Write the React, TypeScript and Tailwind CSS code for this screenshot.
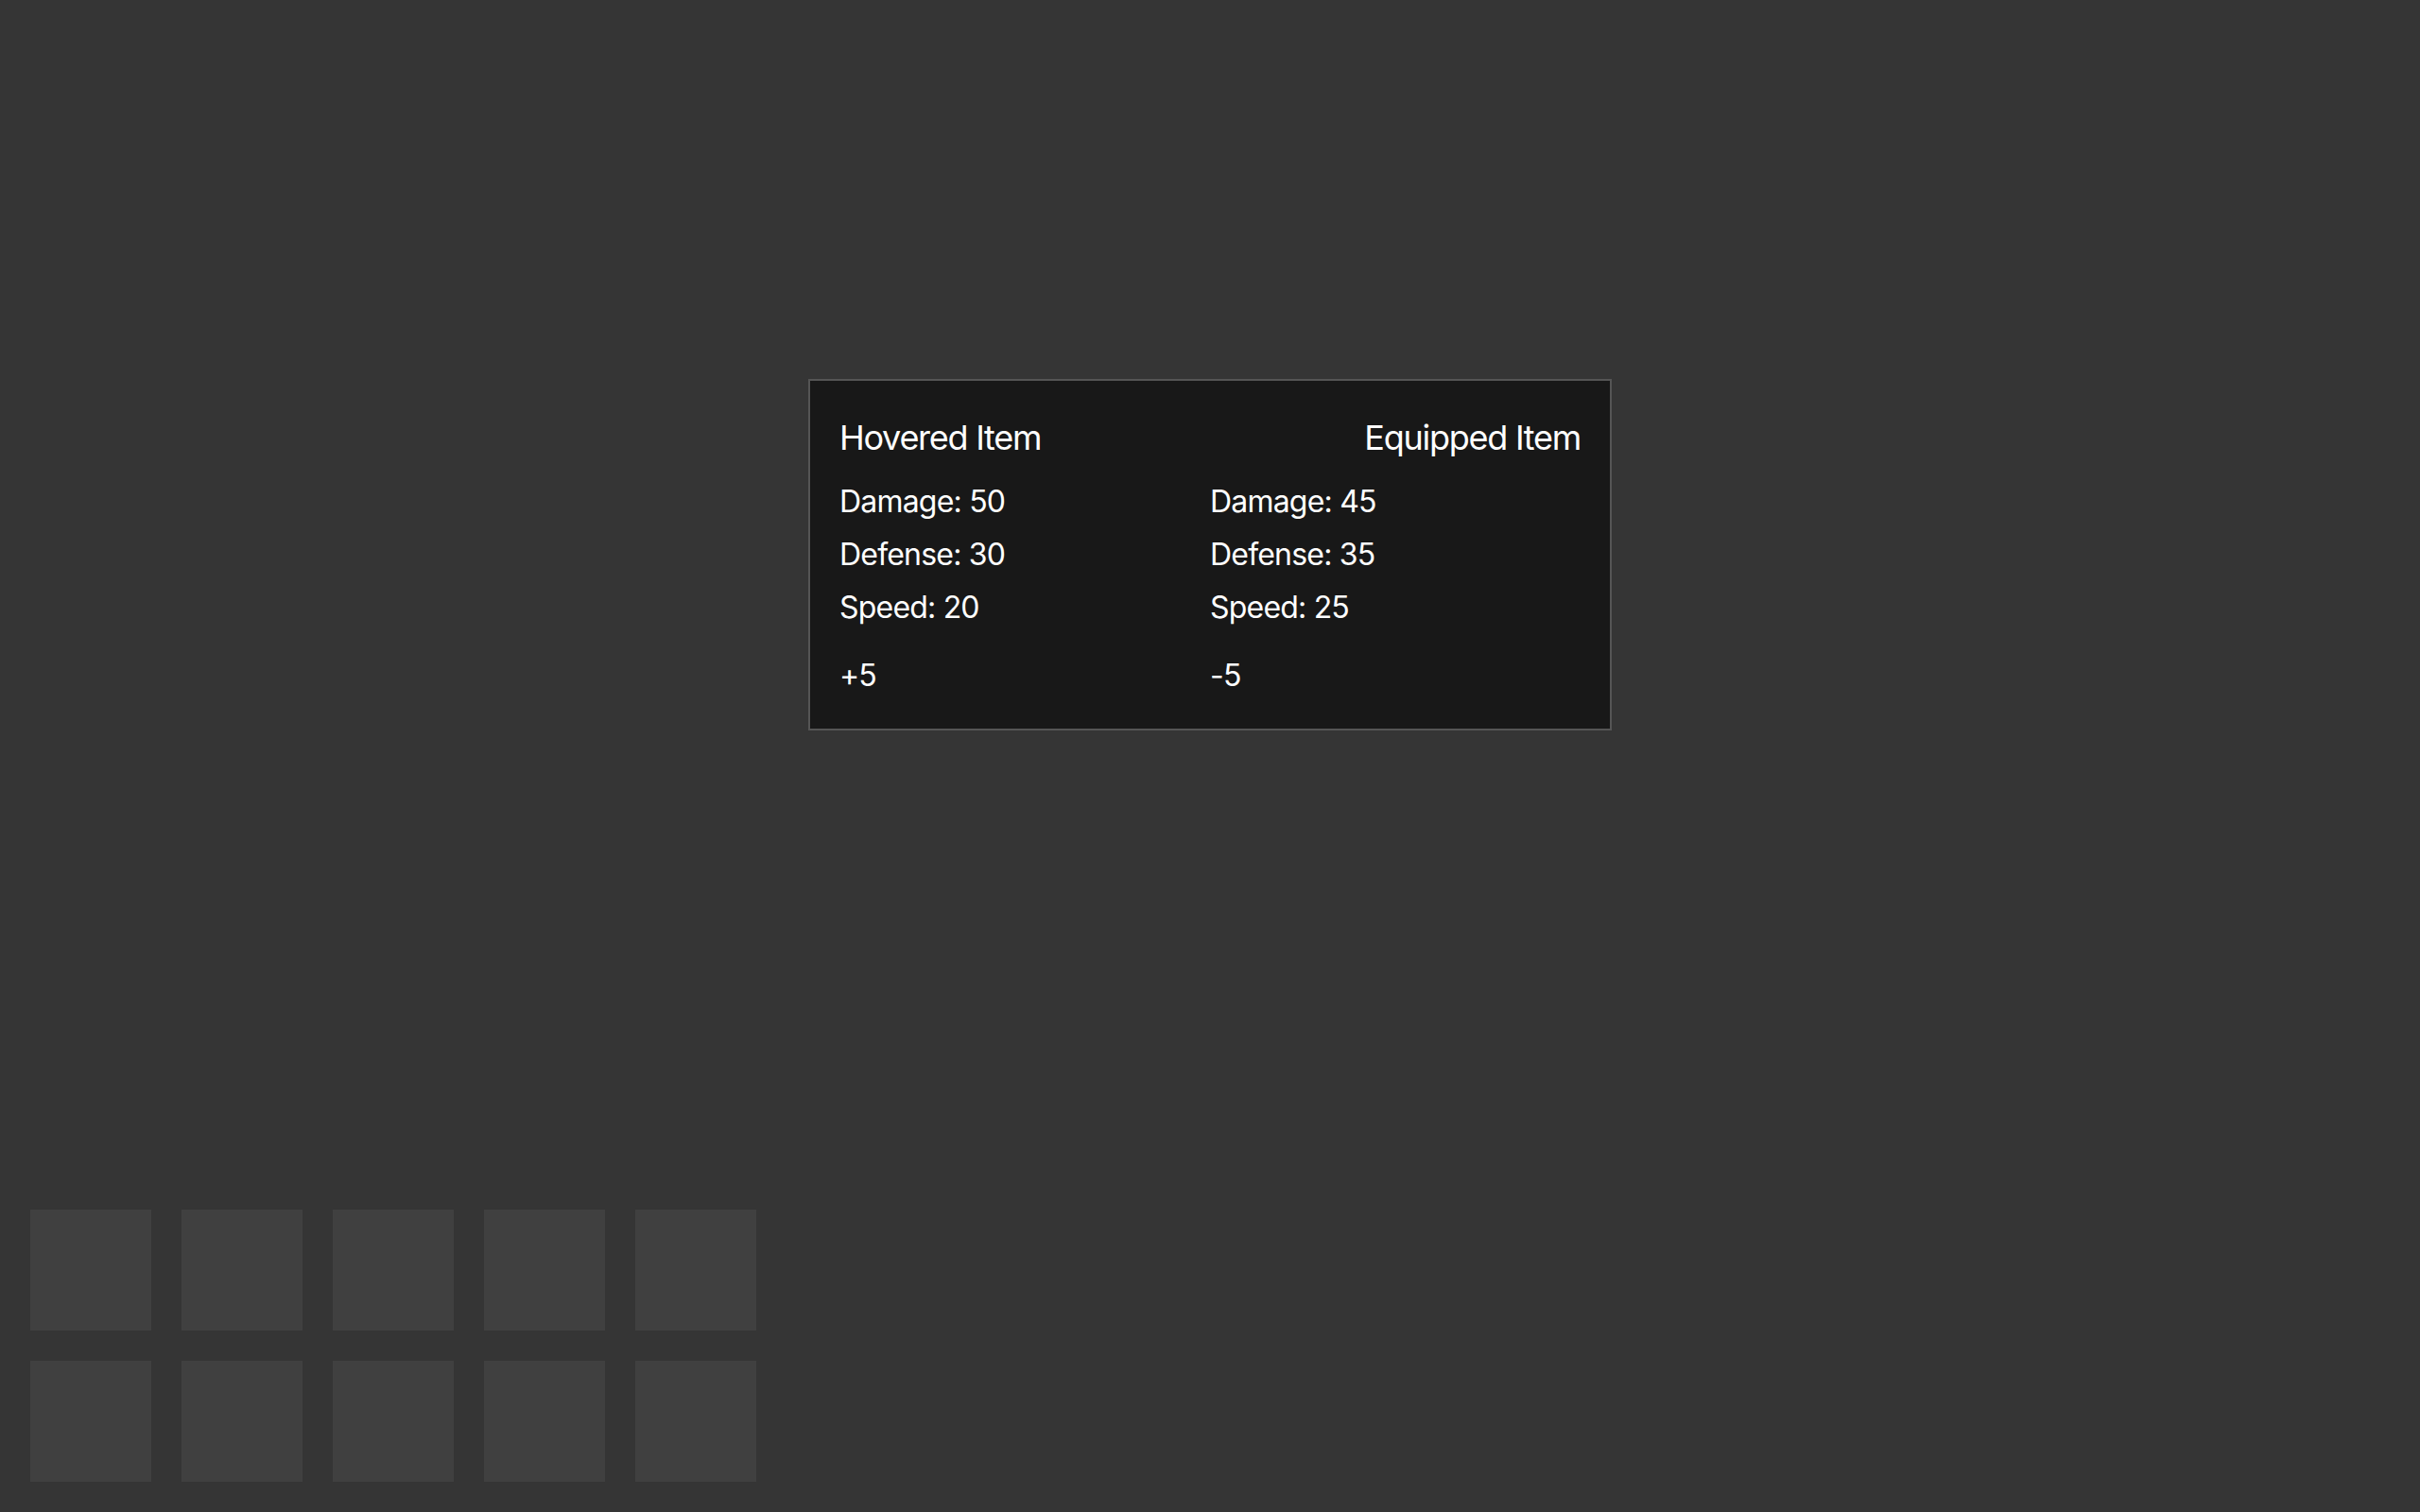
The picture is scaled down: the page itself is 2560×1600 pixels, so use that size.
import React from "react";

interface Stats {
    damage: number;
    defense: number;
    speed: number;
}

const hovered: Stats = { damage: 50, defense: 30, speed: 20 };
const equipped: Stats = { damage: 45, defense: 35, speed: 25 };

function StatColumn({ stats, diff }: { stats: Stats; diff: string }) {
    return (
        <div className="text-[32px] leading-[48px] tracking-[-0.025em]">
            <p className="mb-2">Damage: {stats.damage}</p>
            <p className="mb-2">Defense: {stats.defense}</p>
            <p className="mb-2">Speed: {stats.speed}</p>
            <p className="mt-6">{diff}</p>
        </div>
    );
}

export default function App() {
    return (
        <div className="relative h-[1600px] w-full overflow-hidden bg-[#353535] text-white font-['Inter',sans-serif]">
            {/* Comparison tooltip */}
            <div className="absolute left-1/2 top-[401px] w-[850px] -translate-x-1/2 border-2 border-[#555555] bg-[#181818] px-[31px] py-8">
                <div className="mb-4 flex items-center justify-between text-[36px] leading-[56px] tracking-[-0.035em]">
                    <span>Hovered Item</span>
                    <span>Equipped Item</span>
                </div>
                <div className="grid grid-cols-2">
                    <StatColumn stats={hovered} diff="+5" />
                    <StatColumn stats={equipped} diff="-5" />
                </div>
            </div>

            {/* Inventory slots */}
            <div className="flex h-full flex-col justify-end p-8">
                <div className="grid grid-cols-[repeat(5,128px)] gap-8">
                    {Array.from({ length: 10 }).map((_, i) => (
                        <div key={i} className="h-32 w-32 bg-[#404040]" />
                    ))}
                </div>
            </div>
        </div>
    );
}
